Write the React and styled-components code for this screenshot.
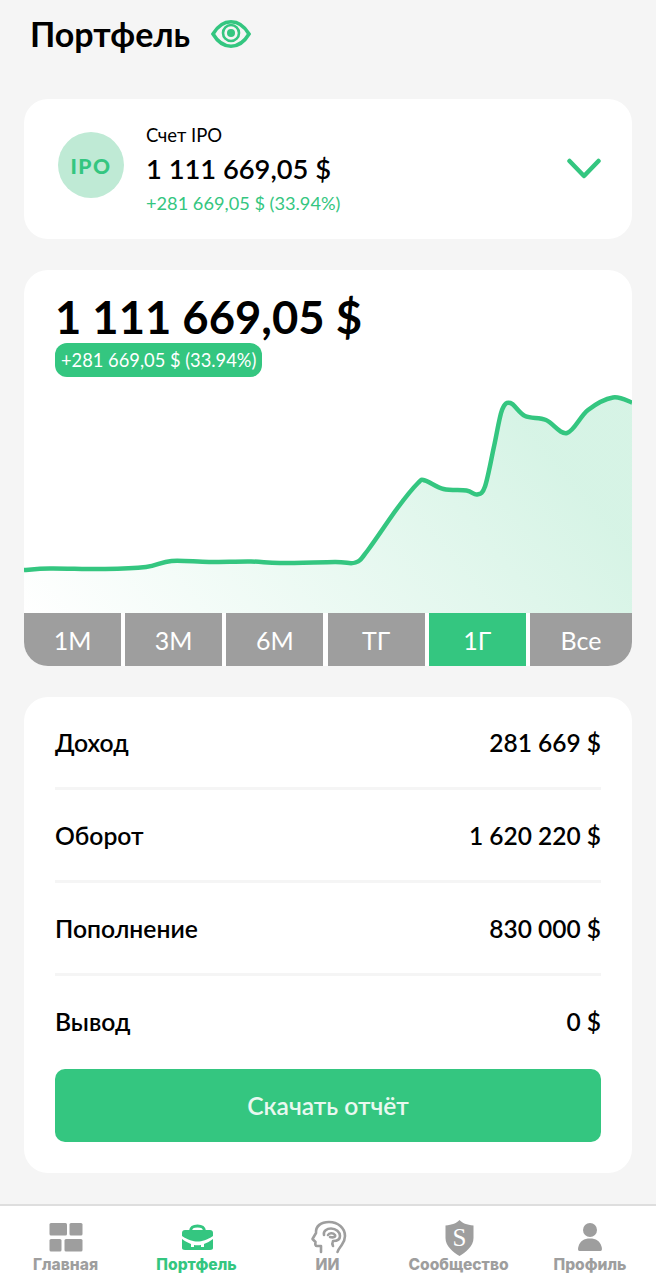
import React from 'react';
import styled, { createGlobalStyle } from 'styled-components';

/* --- Data --- */
const GREEN = '#34c680';
const GREY = '#9e9e9e';

// chart points, in px from the top left of the plot
const POINTS = [
  [0, 193], [26, 191.5], [81, 192], [122, 190], [147.5, 184], [185, 185], [227, 184.5], [256, 186],
  [311, 185], [331.5, 185.5], [344, 173], [373.5, 131], [394, 106], [401, 103.5], [419.5, 112],
  [442.5, 113.5], [453, 117.5], [461, 109.5], [470, 69.5], [478, 33], [486.5, 26], [501, 39],
  [522, 43], [543, 56], [564, 33], [589, 20.5], [608, 25.5],
];

// catmull-rom through the points, as cubic segments
const smoothPath = points =>
  points.reduce((d, [x, y], i) => {
    if (i === 0) return `M${x} ${y}`;
    const p0 = points[Math.max(i - 2, 0)];
    const p1 = points[i - 1];
    const p3 = points[Math.min(i + 1, points.length - 1)];
    const c1x = p1[0] + (x - p0[0]) / 6;
    const c1y = p1[1] + (y - p0[1]) / 6;
    const c2x = x - (p3[0] - p1[0]) / 6;
    const c2y = y - (p3[1] - p1[1]) / 6;
    return `${d} C${c1x.toFixed(1)} ${c1y.toFixed(1)} ${c2x.toFixed(1)} ${c2y.toFixed(1)} ${x} ${y}`;
  }, '');

const LINE = smoothPath(POINTS);

const PERIODS = ['1М', '3М', '6М', 'ТГ', '1Г', 'Все'];
const STATS = [
  { label: 'Доход', value: '281 669 $' },
  { label: 'Оборот', value: '1 620 220 $' },
  { label: 'Пополнение', value: '830 000 $' },
  { label: 'Вывод', value: '0 $' },
];

/* --- Styles --- */
const GlobalStyle = createGlobalStyle`
  html, body {
    margin: 0;
    padding: 0;
    background: #f5f5f5;
    font-family: Lato, "Open Sans", "Noto Sans", sans-serif;
    color: #000;
  }
  * { box-sizing: border-box; }
`;

const Page = styled.div`
  width: 656px;
  height: 1280px;
  display: flex;
  flex-direction: column;
  overflow: hidden;
`;

const Content = styled.main`
  flex: 1;
  padding: 0 24px;
  display: flex;
  flex-direction: column;
`;

const Header = styled.header`
  height: 99px;
  padding: 12px 0 0 6px;
`;

const HeaderRow = styled.div`
  display: flex;
  align-items: center;
  gap: 21px;
`;

const Title = styled.h1`
  margin: 0;
  font-size: 34px;
  line-height: 44px;
  font-weight: 700;
`;

const Card = styled.section`
  background: #fff;
  border-radius: 24px;
  overflow: hidden;
`;

const AccountCard = styled(Card)`
  height: 140px;
  padding: 0 31px 0 34px;
  display: flex;
  align-items: center;
`;

const Avatar = styled.div`
  width: 66px;
  height: 66px;
  border-radius: 50%;
  background: #bfead5;
  color: ${GREEN};
  font-size: 21px;
  font-weight: 900;
  letter-spacing: 1.5px;
  display: flex;
  align-items: center;
  justify-content: center;
  margin: 0 22px 8px 0;
`;

const AccountInfo = styled.div`
  flex: 1;
  display: flex;
  flex-direction: column;
`;

const AccountName = styled.div`
  font-size: 18.5px;
  line-height: 22px;
`;

const AccountAmount = styled.div`
  font-size: 27.3px;
  line-height: 45px;
  font-weight: 600;
`;

const AccountDelta = styled.div`
  font-size: 18.2px;
  line-height: 24px;
  color: ${GREEN};
`;

const ChartCard = styled(Card)`
  margin-top: 31px;
  height: 396px;
  display: flex;
  flex-direction: column;
`;

const Balance = styled.div`
  padding: 20px 0 0 31px;
  height: 73px;
  font-size: 45.4px;
  line-height: 54px;
  font-weight: 700;
`;

const DeltaBadge = styled.div`
  align-self: flex-start;
  margin-left: 31px;
  height: 34px;
  padding: 0 6px;
  border-radius: 12px;
  background: ${GREEN};
  color: #fff;
  font-size: 18.3px;
  line-height: 34px;
  position: relative;
  z-index: 1;
`;

const ChartSvg = styled.svg`
  display: block;
  width: 608px;
  height: 236px;
  flex: none;
`;

const Periods = styled.div`
  display: grid;
  grid-template-columns: repeat(5, 97px) 1fr;
  gap: 4.2px;
  height: 53px;
`;

const Period = styled.div`
  background: ${props => (props.$active ? GREEN : GREY)};
  color: #fff;
  font-size: 25px;
  display: flex;
  align-items: center;
  justify-content: center;
`;

const StatsCard = styled(Card)`
  margin-top: 31px;
  height: 476px;
  padding: 0 31px;
`;

const StatRow = styled.div`
  height: 93px;
  display: flex;
  align-items: center;
  justify-content: space-between;
  font-size: 24.7px;
  font-weight: 600;
  border-bottom: 3px solid #f5f5f5;

  &:last-of-type {
    border-bottom: 0;
    padding-bottom: 2px;
  }
`;

const StatValue = styled.span`
  font-size: 24.5px;
`;

const DownloadButton = styled.button`
  display: block;
  width: 100%;
  height: 73px;
  border: 0;
  border-radius: 10px;
  background: ${GREEN};
  color: #e9f8f0;
  font: 600 24.6px Lato, "Open Sans", sans-serif;
`;

const BottomNav = styled.nav`
  height: 76px;
  flex: none;
  background: #fff;
  border-top: 2px solid #dedede;
  display: grid;
  grid-template-columns: 131px 131px 131px 131px 132px;
`;

const NavItem = styled.div`
  display: flex;
  flex-direction: column;
  align-items: center;
  padding-top: 15px;
  color: ${props => (props.$active ? GREEN : GREY)};
`;

const NavIcon = styled.svg`
  width: 40px;
  height: 34px;
  display: block;
  overflow: visible;
`;

const NavLabel = styled.div`
  margin-top: 1px;
  font-family: Inter, "Noto Sans", sans-serif;
  font-size: 15.6px;
  line-height: 18px;
  font-weight: 800;
  white-space: nowrap;
`;

/* --- Icons --- */
const EyeIcon = () => (
  <svg width="40" height="28" viewBox="0 0 40 28" fill="none">
    <path d="M2 14 C8 4 14 1.8 20 1.8 C26 1.8 32 4 38 14 C32 24 26 26.2 20 26.2 C14 26.2 8 24 2 14 Z" stroke={GREEN} strokeWidth="3.6" />
    <circle cx="20" cy="13" r="8" stroke={GREEN} strokeWidth="2.6" />
    <circle cx="20" cy="13" r="4" fill={GREEN} />
  </svg>
);

const Chevron = () => (
  <svg width="34" height="22" viewBox="0 0 34 22" fill="none">
    <path d="M2.5 3 L17 18 L31.5 3" stroke={GREEN} strokeWidth="4.5" strokeLinecap="round" strokeLinejoin="round" />
  </svg>
);

const HomeGlyph = () => (
  <NavIcon viewBox="0 0 40 34">
    <g fill="currentColor">
      <rect x="3.5" y="2" width="17.5" height="12.5" rx="1.5" />
      <rect x="23.5" y="2" width="13" height="12.5" rx="1.5" />
      <rect x="3.5" y="18" width="12" height="12.5" rx="1.5" />
      <rect x="18.5" y="18" width="18" height="12.5" rx="1.5" />
    </g>
  </NavIcon>
);

const CaseGlyph = () => (
  <NavIcon viewBox="0 0 40 34">
    <path d="M13.5 10 C14 6 16 5 20.5 5 C25 5 27 6 27.5 10" fill="none" stroke="currentColor" strokeWidth="3" />
    <path d="M5 12 C5 10 6 9 8 9 H33 C35 9 36 10 36 12 V15 C30 19 25 20.5 20.5 20.5 C16 20.5 11 19 5 15 Z" fill="currentColor" />
    <path d="M5 18 C9 21 12 22 14 23 V26 H17 V24 Q20.5 24.5 24 24 V26 H27 V23 C30 22 33 20 36 18 V27 C36 28 35 29 33 29 H8 C6 29 5 28 5 27 Z" fill="currentColor" />
  </NavIcon>
);

const BrainGlyph = () => (
  <NavIcon viewBox="0 0 40 34">
    <g fill="none" stroke="currentColor" strokeWidth="2.6" strokeLinecap="round" strokeLinejoin="round">
      <path d="M13 31 V25 H9 C7.5 25 7 23.5 7.5 21 L4.5 18 L8 12 C7.5 5 13 1 21 1 C30 1 37 7 37 15 C37 20 35 22 33 25 C31.5 27 30 29 29.5 31" />
      <path d="M16 14 C15 10 19 7.5 23 7.5 C28 7.5 32 11 32 15 C32 19 28 20 25 20 C24 22 24 23 25 25" />
      <path d="M20 14 C21 12 25 11.5 27 14 C28 16 25 17 22 16" />
    </g>
  </NavIcon>
);

const ShieldGlyph = () => (
  <NavIcon viewBox="0 0 40 34">
    <path d="M20.5 -1 C23 2 28 4 34.5 4.5 V17 C34.5 25 27 31 20.5 35 C14 31 6.5 25 6.5 17 V4.5 C13 4 18 2 20.5 -1 Z" fill="currentColor" />
    <text x="20.5" y="24.5" textAnchor="middle" fontFamily='"Liberation Serif", serif' fontSize="25" fontWeight="400" fill="#fff">S</text>
  </NavIcon>
);

const UserGlyph = () => (
  <NavIcon viewBox="0 0 40 34">
    <circle cx="20" cy="9" r="7" fill="currentColor" />
    <path d="M9.5 30 C7.5 30 8 27 8.5 25.5 C10 20 14 17.5 20 17.5 C26 17.5 30 20 31.5 25.5 C32 27 32.5 30 30.5 30 Z" fill="currentColor" />
  </NavIcon>
);

const NAV = [
  { label: 'Главная', Glyph: HomeGlyph },
  { label: 'Портфель', Glyph: CaseGlyph, active: true },
  { label: 'ИИ', Glyph: BrainGlyph },
  { label: 'Сообщество', Glyph: ShieldGlyph },
  { label: 'Профиль', Glyph: UserGlyph },
];

/* --- Component --- */
const App = () => (
  <Page>
    <GlobalStyle />
    <Content>
      <Header>
        <HeaderRow>
          <Title>Портфель</Title>
          <EyeIcon />
        </HeaderRow>
      </Header>

      <AccountCard>
        <Avatar>IPO</Avatar>
        <AccountInfo>
          <AccountName>Счет IPO</AccountName>
          <AccountAmount>1 111 669,05 $</AccountAmount>
          <AccountDelta>+281 669,05 $ (33.94%)</AccountDelta>
        </AccountInfo>
        <Chevron />
      </AccountCard>

      <ChartCard>
        <Balance>1 111 669,05 $</Balance>
        <DeltaBadge>+281 669,05 $ (33.94%)</DeltaBadge>
        <ChartSvg viewBox="0 0 608 236">
          <defs>
            <linearGradient id="area" x1="0" y1="1" x2="1" y2="0.7">
              <stop offset="0" stopColor={GREEN} stopOpacity="0" />
              <stop offset="1" stopColor={GREEN} stopOpacity="0.2" />
            </linearGradient>
          </defs>
          <path d={`${LINE} V236 H0 Z`} fill="url(#area)" />
          <path d={LINE} fill="none" stroke={GREEN} strokeWidth="4.5" />
        </ChartSvg>
        <Periods>
          {PERIODS.map(p => (
            <Period key={p} $active={p === '1Г'}>{p}</Period>
          ))}
        </Periods>
      </ChartCard>

      <StatsCard>
        {STATS.map(s => (
          <StatRow key={s.label}>
            <span>{s.label}</span>
            <StatValue>{s.value}</StatValue>
          </StatRow>
        ))}
        <DownloadButton>Скачать отчёт</DownloadButton>
      </StatsCard>
    </Content>

    <BottomNav>
      {NAV.map(({ label, Glyph, active }) => (
        <NavItem key={label} $active={active}>
          <Glyph />
          <NavLabel>{label}</NavLabel>
        </NavItem>
      ))}
    </BottomNav>
  </Page>
);

export default App;
